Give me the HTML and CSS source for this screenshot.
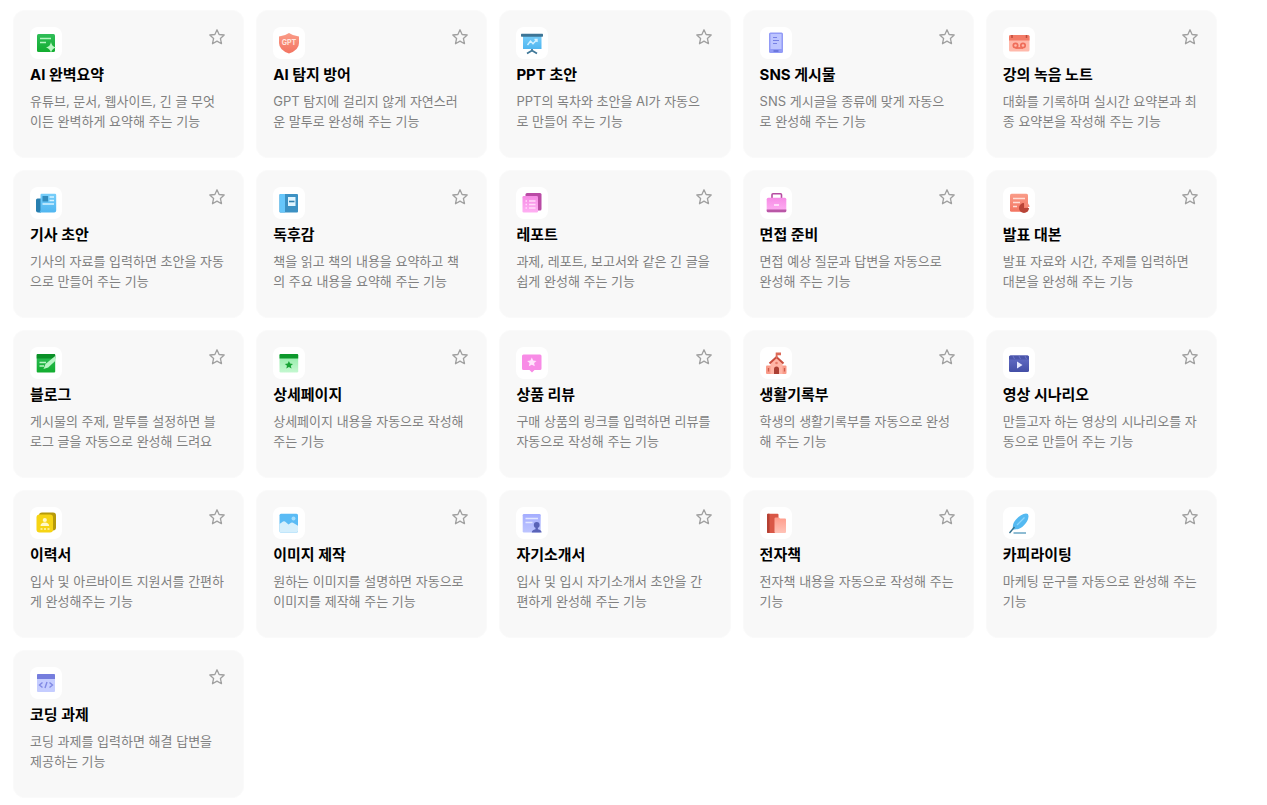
FILE: index.html
```html
<!DOCTYPE html>
<html lang="ko">
<head>
    <meta charset="UTF-8">
    <meta name="viewport" content="width=device-width, initial-scale=1.0">
    <title>AI 도구</title>
    <link rel="stylesheet" href="styles.css">
</head>
<body>
    <!-- 공용 별 아이콘과 그라디언트 -->
    <svg class="sprite" width="0" height="0" aria-hidden="true">
        <defs>
            <symbol id="star" viewBox="0 0 20 20">
                <path d="M10 2.800l2.100 4.700 5.100.5-3.800 3.500 1.100 5.200L10 14.100l-4.500 2.600 1.100-5.200L2.800 8l5.100-.5z" fill="none" stroke="#a0a0a0" stroke-width="1.300" stroke-linejoin="round"/>
            </symbol>
            <linearGradient id="green" x2="0" y2="1"><stop stop-color="#2fbd58"/><stop offset="1" stop-color="#12ad2f"/></linearGradient>
            <linearGradient id="mint" x2="0" y2="1"><stop stop-color="#8eeaa5"/><stop offset="1" stop-color="#c4f8d0"/></linearGradient>
            <linearGradient id="red" x2="0" y2="1"><stop stop-color="#fa9c88"/><stop offset="1" stop-color="#f37461"/></linearGradient>
            <linearGradient id="peach" x2="0" y2="1"><stop stop-color="#ff9c8b"/><stop offset="1" stop-color="#ffc3b7"/></linearGradient>
            <linearGradient id="sky" x2="0" y2="1"><stop stop-color="#77cefa"/><stop offset="1" stop-color="#50b6f0"/></linearGradient>
            <linearGradient id="lilac" x2="0" y2="1"><stop stop-color="#a4adff"/><stop offset="1" stop-color="#bdc5ff"/></linearGradient>
            <linearGradient id="pink" x2="0" y2="1"><stop stop-color="#f68be5"/><stop offset="1" stop-color="#ffb0f3"/></linearGradient>
            <linearGradient id="navy" x2="0" y2="1"><stop stop-color="#6670c8"/><stop offset="1" stop-color="#434ea6"/></linearGradient>
        </defs>
    </svg>

    <main class="tools">
        <article class="card">
            <div class="card-top">
                <span class="icon"><svg viewBox="0 0 24 24"><rect x="3" y="3" width="18" height="18" rx="1.5" fill="url(#green)"/><path d="M6 7.500h11M6 11.500h6" stroke="#b4f6c0" stroke-width="1.5"/><path d="M17 11q.8 4.500 5 5.500-4.200 1-5 5.500-.8-4.500-5-5.500 4.200-1 5-5.500z" fill="#b9f6c3"/></svg></span>
                <button class="favorite" type="button" aria-label="즐겨찾기"><svg><use href="#star"/></svg></button>
            </div>
            <h2>AI 완벽요약</h2>
            <p>유튜브, 문서, 웹사이트, 긴 글 무엇이든 완벽하게 요약해 주는 기능</p>
        </article>

        <article class="card">
            <div class="card-top">
                <span class="icon"><svg viewBox="0 0 24 24"><path d="M12 2q4.500 3.200 10 3.500V12q0 7-10 10.500Q2 19 2 12V5.500Q7.500 5.200 12 2z" fill="url(#red)"/><text class="icon-text" x="12" y="14">GPT</text></svg></span>
                <button class="favorite" type="button" aria-label="즐겨찾기"><svg><use href="#star"/></svg></button>
            </div>
            <h2>AI 탐지 방어</h2>
            <p>GPT 탐지에 걸리지 않게 자연스러운 말투로 완성해 주는 기능</p>
        </article>

        <article class="card">
            <div class="card-top">
                <span class="icon"><svg viewBox="0 0 24 24"><path d="M12 17v3M7 22.500l5-3 5 3" fill="none" stroke="#3f7798" stroke-width="1.8"/><rect x="3" y="4" width="18.5" height="14" fill="url(#sky)"/><rect x="1" y="2.7" width="22" height="3" rx=".6" fill="#3d7596"/><path d="M7.500 14l3-4 2.500 2.800L17 8.500M14.500 8.500H17V11" fill="none" stroke="#d4f1ff" stroke-width="1.4"/></svg></span>
                <button class="favorite" type="button" aria-label="즐겨찾기"><svg><use href="#star"/></svg></button>
            </div>
            <h2>PPT 초안</h2>
            <p>PPT의 목차와 초안을 AI가 자동으로 만들어 주는 기능</p>
        </article>

        <article class="card">
            <div class="card-top">
                <span class="icon"><svg viewBox="0 0 24 24"><rect x="5" y="1.5" width="14" height="20.5" rx="1.5" fill="#929bf6"/><rect x="6.5" y="3" width="11" height="15" fill="#bdc5ff"/><path d="M9 6.500h4M9 9.500h6M9 12.500h4" stroke="#7781e5" stroke-width="1"/><path d="M9.500 20h5" stroke="#5964cf" stroke-width="1.3"/></svg></span>
                <button class="favorite" type="button" aria-label="즐겨찾기"><svg><use href="#star"/></svg></button>
            </div>
            <h2>SNS 게시물</h2>
            <p>SNS 게시글을 종류에 맞게 자동으로 완성해 주는 기능</p>
        </article>

        <article class="card">
            <div class="card-top">
                <span class="icon"><svg viewBox="0 0 24 24"><rect x="2" y="4" width="20.5" height="16.5" rx="1.5" fill="#ffb9ab"/><path d="M2 9.500v-4Q2 4 3.500 4H21q1.500 0 1.500 1.500v4z" fill="#f37b67"/><path d="M5 4v3M19.500 4v3" stroke="#bd4c3c" stroke-width="1.5"/><g fill="none" stroke="#ef6d59" stroke-width="1.7"><circle cx="8.5" cy="14.5" r="2.2"/><circle cx="16" cy="14.5" r="2.2"/><path d="M8.500 17H16"/></g></svg></span>
                <button class="favorite" type="button" aria-label="즐겨찾기"><svg><use href="#star"/></svg></button>
            </div>
            <h2>강의 녹음 노트</h2>
            <p>대화를 기록하며 실시간 요약본과 최종 요약본을 작성해 주는 기능</p>
        </article>

        <article class="card">
            <div class="card-top">
                <span class="icon"><svg viewBox="0 0 24 24"><path d="M3.500 7.500H7v14H4q-2 0-2-2V9q0-1.500 1.500-1.500z" fill="#287fb0"/><path d="M7.500 2.700H21q1.200 0 1.200 1.200v15.600q0 2-2 2H4.500q2-.5 2-2.500V3.900q0-1.200 1-1.200z" fill="url(#sky)"/><rect x="8.5" y="5" width="5.5" height="5.5" fill="#318bbd"/><path d="M15.500 6H20M15.500 9.500H20M8.500 13H20" stroke="#d6f2ff" stroke-width="1.4"/></svg></span>
                <button class="favorite" type="button" aria-label="즐겨찾기"><svg><use href="#star"/></svg></button>
            </div>
            <h2>기사 초안</h2>
            <p>기사의 자료를 입력하면 초안을 자동으로 만들어 주는 기능</p>
        </article>

        <article class="card">
            <div class="card-top">
                <span class="icon"><svg viewBox="0 0 24 24"><rect x="2.5" y="3" width="18.5" height="18.5" rx="1" fill="#3c91c3"/><path d="M3.500 3H8v18.500H3.500q-1 0-1-1V4q0-1 1-1z" fill="#66c6fa"/><rect x="11" y="6" width="7.5" height="9" fill="#e1f5ff"/><path d="M12 10.500h5.500" stroke="#307fac" stroke-width="1.6"/></svg></span>
                <button class="favorite" type="button" aria-label="즐겨찾기"><svg><use href="#star"/></svg></button>
            </div>
            <h2>독후감</h2>
            <p>책을 읽고 책의 내용을 요약하고 책의 주요 내용을 요약해 주는 기능</p>
        </article>

        <article class="card">
            <div class="card-top">
                <span class="icon"><svg viewBox="0 0 24 24"><rect x="5.5" y="2" width="16" height="17.5" rx="1.5" fill="#b94ba5"/><rect x="2.5" y="5" width="15.5" height="16.5" rx="1.2" fill="url(#pink)"/><path d="M5.500 10H7M9 10h6.500M5.500 13.500H7M9 13.500h6.500M5.500 17H7M9 17h6.500" stroke="#ffdcfa" stroke-width="1.3"/></svg></span>
                <button class="favorite" type="button" aria-label="즐겨찾기"><svg><use href="#star"/></svg></button>
            </div>
            <h2>레포트</h2>
            <p>과제, 레포트, 보고서와 같은 긴 글을 쉽게 완성해 주는 기능</p>
        </article>

        <article class="card">
            <div class="card-top">
                <span class="icon"><svg viewBox="0 0 24 24"><path d="M8 8V3.800q0-1 1-1h7.500q1 0 1 1V8" fill="none" stroke="#b64ba1" stroke-width="1.6"/><rect x="2.7" y="6.7" width="19.6" height="14.5" rx="1.5" fill="url(#pink)"/><path d="M2.700 18.500h19.600v1.200q0 1.500-1.500 1.500H4.200q-1.500 0-1.500-1.500z" fill="#b957a6"/><path d="M10 14h5" stroke="#fff0fd" stroke-width="1.5"/></svg></span>
                <button class="favorite" type="button" aria-label="즐겨찾기"><svg><use href="#star"/></svg></button>
            </div>
            <h2>면접 준비</h2>
            <p>면접 예상 질문과 답변을 자동으로 완성해 주는 기능</p>
        </article>

        <article class="card">
            <div class="card-top">
                <span class="icon"><svg viewBox="0 0 24 24"><rect x="3" y="2.7" width="18" height="18" rx="1.5" fill="url(#red)"/><path d="M6 7.500h12M6 11.500h7M6 15.500h4" stroke="#ffded7" stroke-width="1.5"/><path d="M17 12v5h5a5 5 0 1 1-5-5z" fill="#b84437"/><path d="M18 11.500a4.500 4.500 0 0 1 4.500 4.500H18z" fill="#f48a77"/></svg></span>
                <button class="favorite" type="button" aria-label="즐겨찾기"><svg><use href="#star"/></svg></button>
            </div>
            <h2>발표 대본</h2>
            <p>발표 자료와 시간, 주제를 입력하면 대본을 완성해 주는 기능</p>
        </article>

        <article class="card">
            <div class="card-top">
                <span class="icon"><svg viewBox="0 0 24 24"><rect x="2.7" y="3" width="18.5" height="18.5" rx="1" fill="url(#green)"/><path d="M3.700 3h16.500q1 0 1 1v3.500H2.700V4q0-1 1-1z" fill="#0a9027"/><path d="M5.500 11.500H12M5.500 15H10" stroke="#baf5c5" stroke-width="1.5"/><path d="M9.500 18l2-5 9.700-8v5l-7 6.500z" fill="#b8f5c5"/></svg></span>
                <button class="favorite" type="button" aria-label="즐겨찾기"><svg><use href="#star"/></svg></button>
            </div>
            <h2>블로그</h2>
            <p>게시물의 주제, 말투를 설정하면 블로그 글을 자동으로 완성해 드려요</p>
        </article>

        <article class="card">
            <div class="card-top">
                <span class="icon"><svg viewBox="0 0 24 24"><rect x="2.5" y="3" width="18.7" height="18.5" rx="1.2" fill="url(#mint)"/><path d="M3.500 3h16.700q1 0 1 1v3.500H2.500V4q0-1 1-1z" fill="#0c982b"/><path d="M11.900 10l1.200 2.600 2.900.3-2.200 1.900.7 2.800-2.600-1.500-2.600 1.500.7-2.800-2.200-1.900 2.900-.3z" fill="#16a334"/></svg></span>
                <button class="favorite" type="button" aria-label="즐겨찾기"><svg><use href="#star"/></svg></button>
            </div>
            <h2>상세페이지</h2>
            <p>상세페이지 내용을 자동으로 작성해 주는 기능</p>
        </article>

        <article class="card">
            <div class="card-top">
                <span class="icon"><svg viewBox="0 0 24 24"><path d="M3.500 3.500H20q1.500 0 1.500 1.500v12.500Q21.500 19 20 19h-5.500L12 21.500 9.500 19h-6Q2 19 2 17.500V5q0-1.500 1.500-1.500z" fill="#f88be6"/><path d="M11.800 6.500l1.400 3 3.300.4-2.400 2.200.7 3.200-3-1.600-3 1.600.7-3.200-2.400-2.200 3.300-.4z" fill="#ffe4fc"/></svg></span>
                <button class="favorite" type="button" aria-label="즐겨찾기"><svg><use href="#star"/></svg></button>
            </div>
            <h2>상품 리뷰</h2>
            <p>구매 상품의 링크를 입력하면 리뷰를 자동으로 작성해 주는 기능</p>
        </article>

        <article class="card">
            <div class="card-top">
                <span class="icon"><svg viewBox="0 0 24 24"><path d="M2 15.500q0-1 1-1h18.500q1 0 1 1V22q0 1-1 1H3q-1 0-1-1z" fill="#f99b89"/><path d="M6.500 12l6-6 6 6v11h-12z" fill="#ffb5a6"/><path d="M5.500 12.500l7-6.500 7 6.500" fill="none" stroke="#c84d3e" stroke-width="2"/><path d="M11.700 7V1.500H17v2.700h-3.500V7z" fill="#dc6a58"/><path d="M10 23v-5a2.500 2.500 0 0 1 5 0v5z" fill="#aa3f34"/><path d="M4.500 17v3.500M20.500 17v3.500" stroke="#cc5b4b" stroke-width="1.3"/><circle cx="12.5" cy="12" r="1.3" fill="#e97c69"/></svg></span>
                <button class="favorite" type="button" aria-label="즐겨찾기"><svg><use href="#star"/></svg></button>
            </div>
            <h2>생활기록부</h2>
            <p>학생의 생활기록부를 자동으로 완성해 주는 기능</p>
        </article>

        <article class="card">
            <div class="card-top">
                <span class="icon"><svg viewBox="0 0 24 24"><rect x="2" y="4.5" width="20" height="16.5" rx="1.5" fill="url(#navy)"/><path d="M3.500 4.500h17Q22 4.500 22 6v2.500H2V6q0-1.500 1.500-1.500z" fill="#4b55aa"/><path d="M6 5l1.500 3M12 5l1.500 3M18 5l1.500 3" stroke="#6a74c8" stroke-width="1"/><path d="M10 10.500l5.500 3.500-5.500 3.500z" fill="#e6e9ff"/></svg></span>
                <button class="favorite" type="button" aria-label="즐겨찾기"><svg><use href="#star"/></svg></button>
            </div>
            <h2>영상 시나리오</h2>
            <p>만들고자 하는 영상의 시나리오를 자동으로 만들어 주는 기능</p>
        </article>

        <article class="card">
            <div class="card-top">
                <span class="icon"><svg viewBox="0 0 24 24"><rect x="5" y="1.5" width="17" height="18" rx="3" fill="#b79a09"/><rect x="2.5" y="3.5" width="16.5" height="18" rx="3" fill="#f6d414"/><circle cx="10.8" cy="9" r="2.1" fill="#fff8c9"/><path d="M6.500 15q0-3.500 4.300-3.500t4.300 3.500z" fill="#fff8c9"/><path d="M6.500 18h2M10 18h2M13.500 18h2" stroke="#fff5b5" stroke-width="1.6"/></svg></span>
                <button class="favorite" type="button" aria-label="즐겨찾기"><svg><use href="#star"/></svg></button>
            </div>
            <h2>이력서</h2>
            <p>입사 및 아르바이트 지원서를 간편하게 완성해주는 기능</p>
        </article>

        <article class="card">
            <div class="card-top">
                <span class="icon"><svg viewBox="0 0 24 24"><rect x="2.5" y="2.7" width="18.5" height="18.7" rx="1.5" fill="#5abbf5"/><circle cx="16.5" cy="7.5" r="2" fill="#a4ddfc"/><path d="M2.500 13L6 10.500q1-.7 2 0l3.500 3 2.500-1.700q1-.6 2 0l5 3v5q0 1.600-1.500 1.600H4q-1.500 0-1.500-1.500z" fill="#d5effc"/></svg></span>
                <button class="favorite" type="button" aria-label="즐겨찾기"><svg><use href="#star"/></svg></button>
            </div>
            <h2>이미지 제작</h2>
            <p>원하는 이미지를 설명하면 자동으로 이미지를 제작해 주는 기능</p>
        </article>

        <article class="card">
            <div class="card-top">
                <span class="icon"><svg viewBox="0 0 24 24"><rect x="2.7" y="3" width="18" height="18.5" rx="1.2" fill="url(#lilac)"/><path d="M5.500 7.500H18M5.500 11.500h7" stroke="#e3e7ff" stroke-width="1.6"/><circle cx="16.7" cy="14" r="2.9" fill="#5963b8"/><path d="M11.800 21.500q0-2.600 3.700-3.300v-2h2.400v2q3.700.7 3.700 3.300z" fill="#5963b8"/></svg></span>
                <button class="favorite" type="button" aria-label="즐겨찾기"><svg><use href="#star"/></svg></button>
            </div>
            <h2>자기소개서</h2>
            <p>입사 및 입시 자기소개서 초안을 간편하게 완성해 주는 기능</p>
        </article>

        <article class="card">
            <div class="card-top">
                <span class="icon"><svg viewBox="0 0 24 24"><rect x="3" y="2.7" width="11.5" height="19.3" rx="1" fill="#d95746"/><path d="M4 2.700h1.500V22H4q-1 0-1-1V3.700q0-1 1-1z" fill="#b44033"/><path d="M11.500 6.500H15l1 1h5q1 0 1 1V21q0 1-1 1h-9.500q-1 0-1-1V7.500q0-1 1-1z" fill="url(#peach)"/></svg></span>
                <button class="favorite" type="button" aria-label="즐겨찾기"><svg><use href="#star"/></svg></button>
            </div>
            <h2>전자책</h2>
            <p>전자책 내용을 자동으로 작성해 주는 기능</p>
        </article>

        <article class="card">
            <div class="card-top">
                <span class="icon"><svg viewBox="0 0 24 24"><path d="M6 18.500Q5 12.500 9 8.500 14 3 19 2.500q2.800 0 2.500 3-.3 4.500-4.300 8.500-4 5-11.200 4.500z" fill="#54b9f1"/><path d="M17.500 6.500L10 14" stroke="#8bd5fb" stroke-width="1.3"/><path d="M2.500 22l5-6" stroke="#32718f" stroke-width="1.4"/><path d="M6.500 22H19" stroke="#4390b6" stroke-width="1.2"/></svg></span>
                <button class="favorite" type="button" aria-label="즐겨찾기"><svg><use href="#star"/></svg></button>
            </div>
            <h2>카피라이팅</h2>
            <p>마케팅 문구를 자동으로 완성해 주는 기능</p>
        </article>

        <article class="card">
            <div class="card-top">
                <span class="icon"><svg viewBox="0 0 24 24"><rect x="3" y="3" width="18" height="18" rx="1" fill="#c5cdff"/><path d="M4 3h16q1 0 1 1v4H3V4q0-1 1-1z" fill="#757ddd"/><path d="M8.500 11.500l-3 2.500 3 2.500M15.500 11.500l3 2.500-3 2.500M13 11l-2 6" fill="none" stroke="#8089e4" stroke-width="1.4"/></svg></span>
                <button class="favorite" type="button" aria-label="즐겨찾기"><svg><use href="#star"/></svg></button>
            </div>
            <h2>코딩 과제</h2>
            <p>코딩 과제를 입력하면 해결 답변을 제공하는 기능</p>
        </article>
    </main>
</body>
</html>
```

FILE: styles.css
```css
* {
    box-sizing: border-box;
}
body {
    margin: 0;
    background-color: #fff;
    font-family: Inter, "Noto Sans CJK KR", sans-serif;
}
.sprite {
    position: absolute;
}
.tools {
    display: grid;
    grid-template-columns: repeat(5, 1fr);
    gap: 12px;
    padding: 10px 50px 7px 13px;
}
.card {
    padding: 16px 16px 26px;
    background-color: #f8f8f8;
    border: 1px solid #fafafa;
    border-radius: 12px;
}
.card-top {
    display: flex;
    justify-content: space-between;
    align-items: flex-start;
}
.icon {
    display: flex;
    align-items: center;
    justify-content: center;
    width: 32px;
    height: 32px;
    background-color: #fff;
    border-radius: 8px;
}
.icon svg {
    width: 24px;
    height: 24px;
}
.icon-text {
    fill: #ffe5df;
    font-size: 7px;
    font-weight: 700;
    text-anchor: middle;
}
.favorite {
    width: 20px;
    height: 20px;
    padding: 0;
    background: none;
    border: none;
    cursor: pointer;
}
.favorite svg {
    display: block;
    width: 20px;
    height: 20px;
}
.card h2 {
    margin: 6px 0;
    color: #000;
    font-size: 15px;
    font-weight: 700;
    line-height: 20px;
}
.card p {
    margin: 0;
    padding-right: 2px;
    color: #808080;
    font-size: 13px;
    line-height: 20px;
}
```
